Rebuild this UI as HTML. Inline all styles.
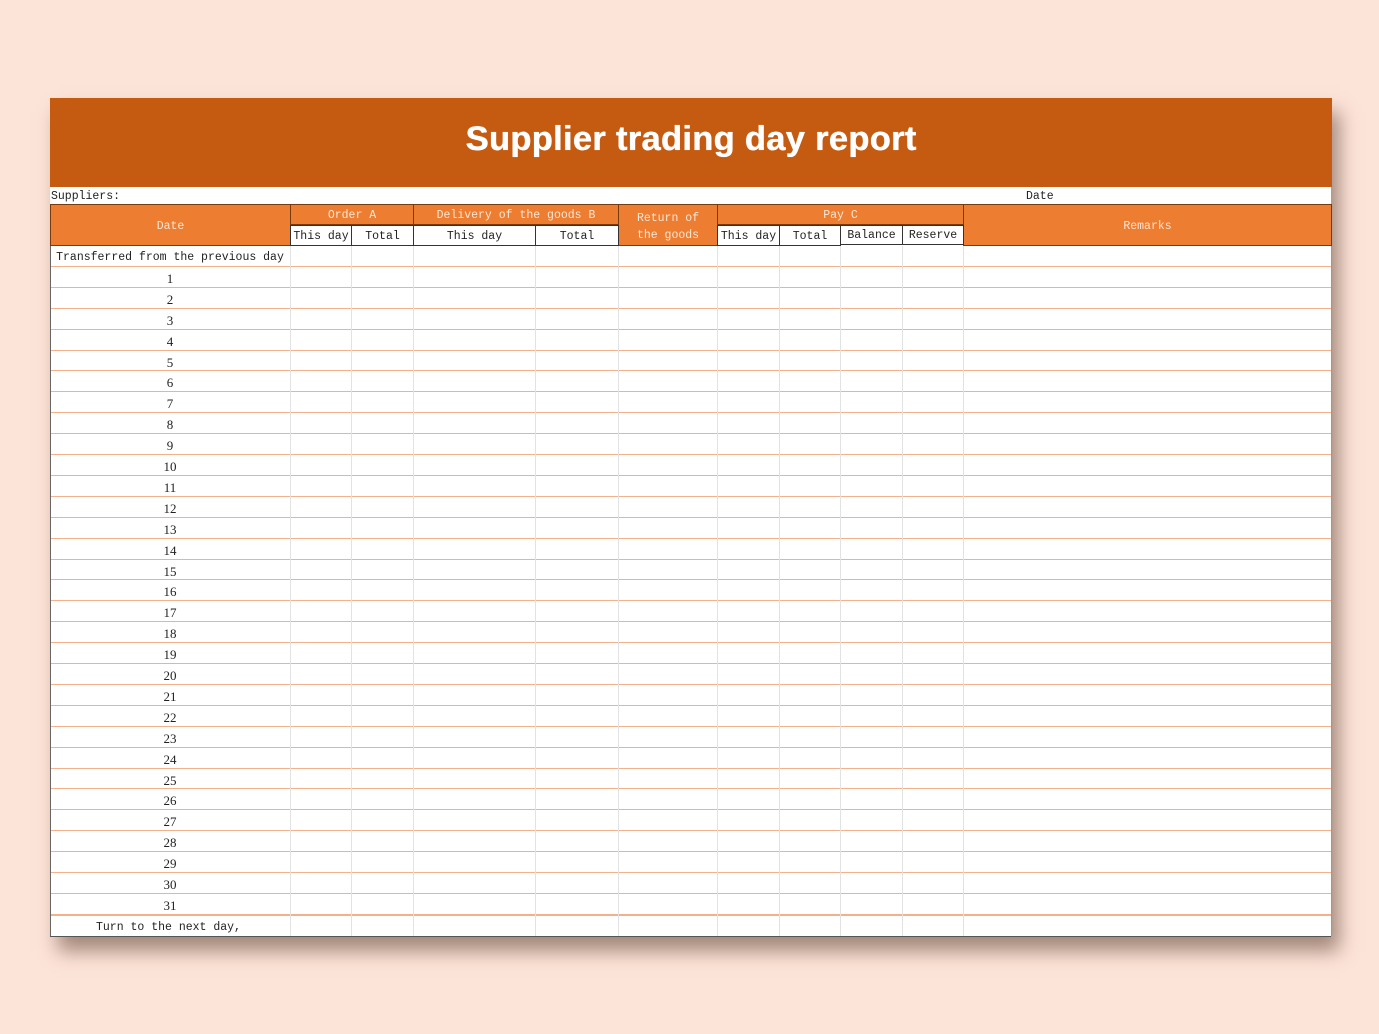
<!DOCTYPE html>
<html><head><meta charset="utf-8"><style>
html,body{margin:0;padding:0}
body{width:1379px;height:1034px;background:#fde4d8;position:relative;overflow:hidden;font-family:"Liberation Mono",monospace;font-size:11.5px;color:#222}
.sheet{position:absolute;left:50px;top:98px;width:1281px;height:838px;background:#fff;box-shadow:8px 14px 18px rgba(90,60,45,.55);border-bottom:1px solid #555}
.title{position:absolute;left:50px;top:98px;width:1282px;height:89px;background:#c55a11;color:#fff;font-family:"Liberation Sans",sans-serif;font-weight:bold;font-size:34.5px;text-align:center;line-height:82px;letter-spacing:.3px;text-shadow:0 0 .6px #fff,.4px 0 0 #fff}
.a{position:absolute;box-sizing:border-box;text-align:center;white-space:nowrap}
.h{background:#ed7d31;color:#fbe7d6;border:1px solid #7a3a10}
.w{background:#fff;color:#222;border:1px solid #333}
.l{position:absolute;left:50px;width:1282px;height:1px;background:#f4b08a}
.v{position:absolute;top:246px;height:690px;width:1px;background:#e2e2e2}
.r{position:absolute;left:50px;width:240px;text-align:center;height:21px;line-height:24px}
.n{font-family:"Liberation Serif",serif;font-size:13px}
</style></head><body>
<div class="sheet"></div>
<div class="title">Supplier trading day report</div>
<div class="a" style="left:51px;top:190px;text-align:left">Suppliers:</div>
<div class="a" style="left:1026px;top:190px">Date</div>

<div class="a h" style="left:50px;top:204px;width:241px;height:42px;line-height:43px">Date</div>
<div class="a h" style="left:290px;top:204px;width:124px;height:21px;line-height:21px">Order A</div>
<div class="a h" style="left:413px;top:204px;width:206px;height:21px;line-height:21px">Delivery of the goods B</div>
<div class="a h" style="left:618px;top:204px;width:100px;height:42px;line-height:17px;padding-top:5px;white-space:normal">Return of<br>the goods</div>
<div class="a h" style="left:717px;top:204px;width:247px;height:21px;line-height:21px">Pay C</div>
<div class="a h" style="left:963px;top:204px;width:369px;height:42px;line-height:43px">Remarks</div>

<div class="a w" style="left:290px;top:225px;width:62px;height:21px;line-height:22px">This day</div>
<div class="a w" style="left:351px;top:225px;width:63px;height:21px;line-height:22px">Total</div>
<div class="a w" style="left:413px;top:225px;width:123px;height:21px;line-height:22px">This day</div>
<div class="a w" style="left:535px;top:225px;width:84px;height:21px;line-height:22px">Total</div>
<div class="a w" style="left:717px;top:225px;width:63px;height:21px;line-height:22px">This day</div>
<div class="a w" style="left:779px;top:225px;width:62px;height:21px;line-height:22px">Total</div>
<div class="a w" style="left:840px;top:225px;width:63px;height:20px;line-height:19px">Balance</div>
<div class="a w" style="left:902px;top:225px;width:62px;height:20px;line-height:19px">Reserve</div>

<div class="l" style="top:266px"></div><div class="l" style="top:287px"></div><div class="l" style="top:308px"></div><div class="l" style="top:329px"></div><div class="l" style="top:350px"></div><div class="l" style="top:370px"></div><div class="l" style="top:391px"></div><div class="l" style="top:412px"></div><div class="l" style="top:433px"></div><div class="l" style="top:454px"></div><div class="l" style="top:475px"></div><div class="l" style="top:496px"></div><div class="l" style="top:517px"></div><div class="l" style="top:538px"></div><div class="l" style="top:559px"></div><div class="l" style="top:579px"></div><div class="l" style="top:600px"></div><div class="l" style="top:621px"></div><div class="l" style="top:642px"></div><div class="l" style="top:663px"></div><div class="l" style="top:684px"></div><div class="l" style="top:705px"></div><div class="l" style="top:726px"></div><div class="l" style="top:747px"></div><div class="l" style="top:768px"></div><div class="l" style="top:788px"></div><div class="l" style="top:809px"></div><div class="l" style="top:830px"></div><div class="l" style="top:851px"></div><div class="l" style="top:872px"></div><div class="l" style="top:893px"></div><div class="l" style="top:914px;height:2px"></div>

<div class="v" style="left:290px"></div><div class="v" style="left:351px"></div><div class="v" style="left:413px"></div><div class="v" style="left:535px"></div><div class="v" style="left:618px"></div><div class="v" style="left:717px"></div><div class="v" style="left:779px"></div><div class="v" style="left:840px"></div><div class="v" style="left:902px"></div><div class="v" style="left:963px"></div>
<div class="v" style="left:50px;background:#666"></div><div class="v" style="left:1331px;background:#999"></div>

<div class="r" style="top:246px">Transferred from the previous day</div>
<div class="r n" style="top:266.9px">1</div>
<div class="r n" style="top:287.8px">2</div>
<div class="r n" style="top:308.7px">3</div>
<div class="r n" style="top:329.6px">4</div>
<div class="r n" style="top:350.5px">5</div>
<div class="r n" style="top:371.4px">6</div>
<div class="r n" style="top:392.3px">7</div>
<div class="r n" style="top:413.2px">8</div>
<div class="r n" style="top:434.1px">9</div>
<div class="r n" style="top:455px">10</div>
<div class="r n" style="top:475.9px">11</div>
<div class="r n" style="top:496.8px">12</div>
<div class="r n" style="top:517.7px">13</div>
<div class="r n" style="top:538.6px">14</div>
<div class="r n" style="top:559.5px">15</div>
<div class="r n" style="top:580.4px">16</div>
<div class="r n" style="top:601.3px">17</div>
<div class="r n" style="top:622.2px">18</div>
<div class="r n" style="top:643.1px">19</div>
<div class="r n" style="top:664px">20</div>
<div class="r n" style="top:684.9px">21</div>
<div class="r n" style="top:705.8px">22</div>
<div class="r n" style="top:726.7px">23</div>
<div class="r n" style="top:747.6px">24</div>
<div class="r n" style="top:768.5px">25</div>
<div class="r n" style="top:789.4px">26</div>
<div class="r n" style="top:810.3px">27</div>
<div class="r n" style="top:831.2px">28</div>
<div class="r n" style="top:852.1px">29</div>
<div class="r n" style="top:873px">30</div>
<div class="r n" style="top:893.9px">31</div>
<div class="r" style="top:915.5px;left:96px;width:auto;text-align:left">Turn to the next day,</div>
</body></html>
